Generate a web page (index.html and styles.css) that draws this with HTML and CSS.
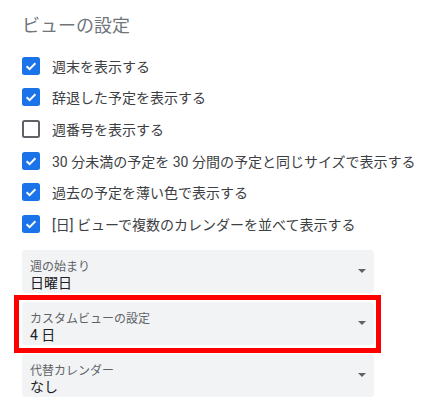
FILE: index.html
```html
<!DOCTYPE html>
<html lang="ja">
<head>
<meta charset="utf-8">
<link rel="stylesheet" href="styles.css">
</head>
<body>
<div class="panel">
  <h2 class="title">ビューの設定</h2>
  <ul class="checks">
    <li class="row"><svg class="cb" viewBox="0 0 18 18"><rect width="18" height="18" rx="2.5" fill="#1a73e8"/><path d="M4.6 9.3 L7.6 12.2 L13.4 6.3" fill="none" stroke="#fff" stroke-width="2"/></svg><span>週末を表示する</span></li>
    <li class="row"><svg class="cb" viewBox="0 0 18 18"><rect width="18" height="18" rx="2.5" fill="#1a73e8"/><path d="M4.6 9.3 L7.6 12.2 L13.4 6.3" fill="none" stroke="#fff" stroke-width="2"/></svg><span>辞退した予定を表示する</span></li>
    <li class="row"><svg class="cb" viewBox="0 0 18 18"><rect x="1" y="1" width="16" height="16" rx="1.5" fill="none" stroke="#5f6368" stroke-width="2"/></svg><span>週番号を表示する</span></li>
    <li class="row"><svg class="cb" viewBox="0 0 18 18"><rect width="18" height="18" rx="2.5" fill="#1a73e8"/><path d="M4.6 9.3 L7.6 12.2 L13.4 6.3" fill="none" stroke="#fff" stroke-width="2"/></svg><span>30 分未満の予定を 30 分間の予定と同じサイズで表示する</span></li>
    <li class="row"><svg class="cb" viewBox="0 0 18 18"><rect width="18" height="18" rx="2.5" fill="#1a73e8"/><path d="M4.6 9.3 L7.6 12.2 L13.4 6.3" fill="none" stroke="#fff" stroke-width="2"/></svg><span>過去の予定を薄い色で表示する</span></li>
    <li class="row"><svg class="cb" viewBox="0 0 18 18"><rect width="18" height="18" rx="2.5" fill="#1a73e8"/><path d="M4.6 9.3 L7.6 12.2 L13.4 6.3" fill="none" stroke="#fff" stroke-width="2"/></svg><span>[日] ビューで複数のカレンダーを並べて表示する</span></li>
  </ul>
  <div class="selects">
    <div class="select">
      <div class="texts"><div class="label">週の始まり</div><div class="value">日曜日</div></div>
      <span class="arrow"></span>
    </div>
    <div class="select highlighted">
      <div class="texts"><div class="label">カスタムビューの設定</div><div class="value">4 日</div></div>
      <span class="arrow"></span>
      <span class="redbox"></span>
    </div>
    <div class="select">
      <div class="texts"><div class="label">代替カレンダー</div><div class="value">なし</div></div>
      <span class="arrow"></span>
    </div>
  </div>
</div>
</body>
</html>
```
FILE: styles.css
```css
html, body {
  margin: 0;
  padding: 0;
  background: #fff;
}
body {
  font-family: Roboto, "Noto Sans CJK JP", sans-serif;
  color: #3c4043;
  width: 434px;
  height: 411px;
  overflow: hidden;
}
.panel {
  padding: 0 0 0 22px;
}
.title {
  margin: 0;
  height: 50px;
  padding-top: 14px;
  box-sizing: border-box;
  font-size: 18px;
  line-height: 24px;
  font-weight: 400;
  color: #70757a;
}
.checks {
  list-style: none;
  margin: 0;
  padding: 0;
}
.row {
  display: flex;
  align-items: center;
  height: 31.6px;
  font-size: 14px;
  color: #3c4043;
}
.cb {
  width: 18px;
  height: 18px;
  flex: none;
  margin-right: 12px;
}
.selects {
  margin-top: 10px;
  width: 352px;
  display: flex;
  flex-direction: column;
  gap: 9px;
}
.select {
  position: relative;
  background: #f1f3f4;
  border-radius: 4px;
  height: 43px;
  box-sizing: border-box;
  padding: 9px 8px 0 8px;
  display: flex;
  align-items: flex-start;
  justify-content: space-between;
}
.label {
  font-size: 12px;
  line-height: 16px;
  color: #5f6368;
}
.value {
  font-size: 14px;
  line-height: 16px;
  color: #202124;
}
.arrow {
  align-self: center;
  margin-top: -9px;
  width: 0;
  height: 0;
  border-left: 4px solid transparent;
  border-right: 4px solid transparent;
  border-top: 4px solid #5f6368;
}
.redbox {
  position: absolute;
  left: -8px;
  right: -7px;
  top: -7px;
  bottom: -8px;
  border: 5px solid #ff0000;
  pointer-events: none;
}
```
